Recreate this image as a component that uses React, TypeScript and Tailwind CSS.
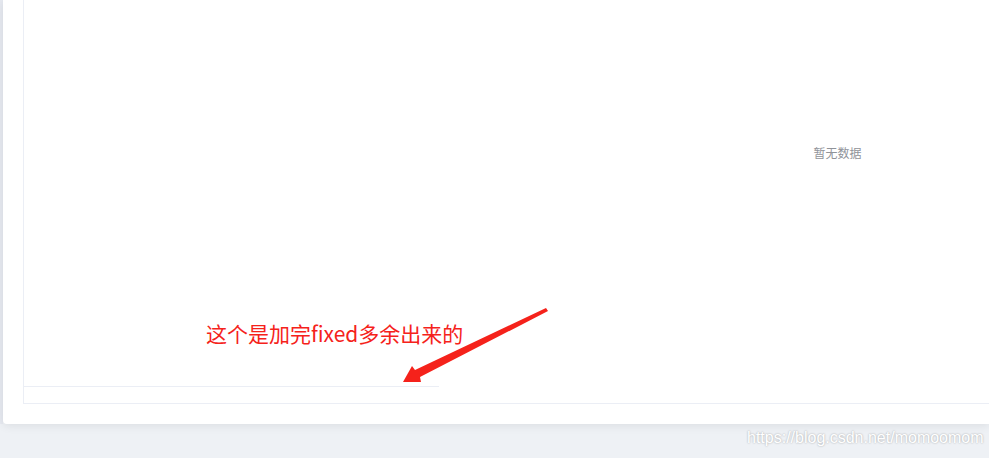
import React from 'react';

export default function App() {
  return (
    <div className="relative h-[458px] w-[989px] overflow-hidden bg-[#eef1f5] font-['Liberation_Sans','Noto_Sans_CJK_SC',sans-serif]">
      <div className="flex h-[424px]">
        {/* left edge strip */}
        <div className="w-[3px] shrink-0 bg-[#e6e9f0]" />
        {/* card */}
        <div className="flex-1 overflow-hidden rounded-bl-[4px] bg-white pl-[20px] shadow-[0_2px_10px_rgba(0,0,0,0.08)]">
          <div className="flex h-[404px] w-[1640px] flex-col border-b border-l border-[#ebeef5]">
            <div className="flex flex-1">
              {/* fixed column leftover */}
              <div className="flex h-[387px] w-[415px] shrink-0 border-b border-[#ebeef5]" />
              <div className="flex flex-1 items-start justify-center pt-[146px]">
                <span className="-ml-[427px] text-[12px] leading-[16px] text-[#909399]">暂无数据</span>
              </div>
            </div>
          </div>
        </div>
      </div>

      {/* annotation */}
      <div className="absolute left-[206px] top-[318px] text-[21px] leading-[30px] text-[#f5221b] font-['Noto_Sans_CJK_SC',sans-serif]">
        这个是加完fixed多余出来的
      </div>
      <svg className="absolute left-0 top-0" width="989" height="458" viewBox="0 0 989 458">
        <polygon
          points="403,382 412,366 415,370 546,308 548,311 420,377 421,382"
          fill="#f5221b"
        />
      </svg>

      {/* watermark */}
      <div className="absolute left-[747px] top-[429px] text-[16px] leading-[18px] text-white [text-shadow:0_0_2px_rgba(0,0,0,0.35)]">
        https://blog.csdn.net/momoomom
      </div>
    </div>
  );
}
